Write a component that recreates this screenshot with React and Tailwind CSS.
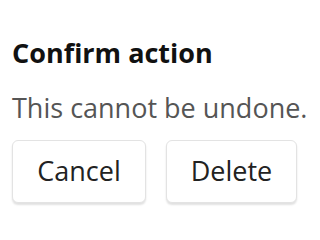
export default function App() {
  return (
    <div className="w-[320px] h-[240px] bg-white px-3 pt-[34px]" style={{ fontFamily: '"Open Sans", sans-serif' }}>
      <h2 className="text-[27px] leading-[38px] font-bold text-[#111]">Confirm action</h2>
      <p className="mt-[17px] text-[27px] leading-[38px] text-[#555] whitespace-nowrap">This cannot be undone.</p>
      <div className="mt-[13px] flex gap-5">
        <button className="w-[134px] h-[63px] rounded-md border border-[#e3e3e3] bg-white text-[27px] text-[#222] shadow-[0_2px_2px_rgba(0,0,0,0.12)]">Cancel</button>
        <button className="w-[131px] h-[63px] rounded-md border border-[#e3e3e3] bg-white text-[27px] text-[#222] shadow-[0_2px_2px_rgba(0,0,0,0.12)]">Delete</button>
      </div>
    </div>
  );
}
